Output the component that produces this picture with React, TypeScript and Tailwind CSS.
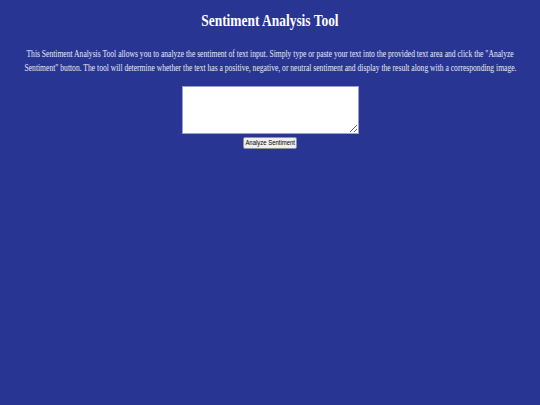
export default function App() {
  return (
    <div className="min-h-screen w-full overflow-hidden bg-[#283593] text-white font-['Liberation_Serif',serif] flex flex-col items-center">
      <h1 className="mt-[11px] h-[20px] text-[17px] leading-[20px] font-bold whitespace-nowrap scale-x-[0.79]">
        Sentiment Analysis Tool
      </h1>
      <div className="mt-[16px] flex flex-col items-center text-[11px] leading-[13.5px] text-[#e8e9f3]">
        <p className="whitespace-nowrap scale-x-[0.69]">
          This Sentiment Analysis Tool allows you to analyze the sentiment of text input. Simply type or paste your text into the provided text area and click the "Analyze
        </p>
        <p className="whitespace-nowrap scale-x-[0.69]">
          Sentiment" button. The tool will determine whether the text has a positive, negative, or neutral sentiment and display the result along with a corresponding image.
        </p>
      </div>
      <textarea className="mt-[12px] w-[177px] h-[48px] bg-white border border-[#9aa0c8] text-black text-[11px] p-[2px]" />
      <button className="mt-[3px] w-[54px] h-[12px] p-0 bg-[#efefef] border border-[#8f8f9d] rounded-[2px] text-black text-[7px] leading-[10px] font-['Liberation_Sans',sans-serif] whitespace-nowrap flex items-center justify-center">
        <span className="inline-block scale-x-[0.85]">Analyze Sentiment</span>
      </button>
    </div>
  );
}
